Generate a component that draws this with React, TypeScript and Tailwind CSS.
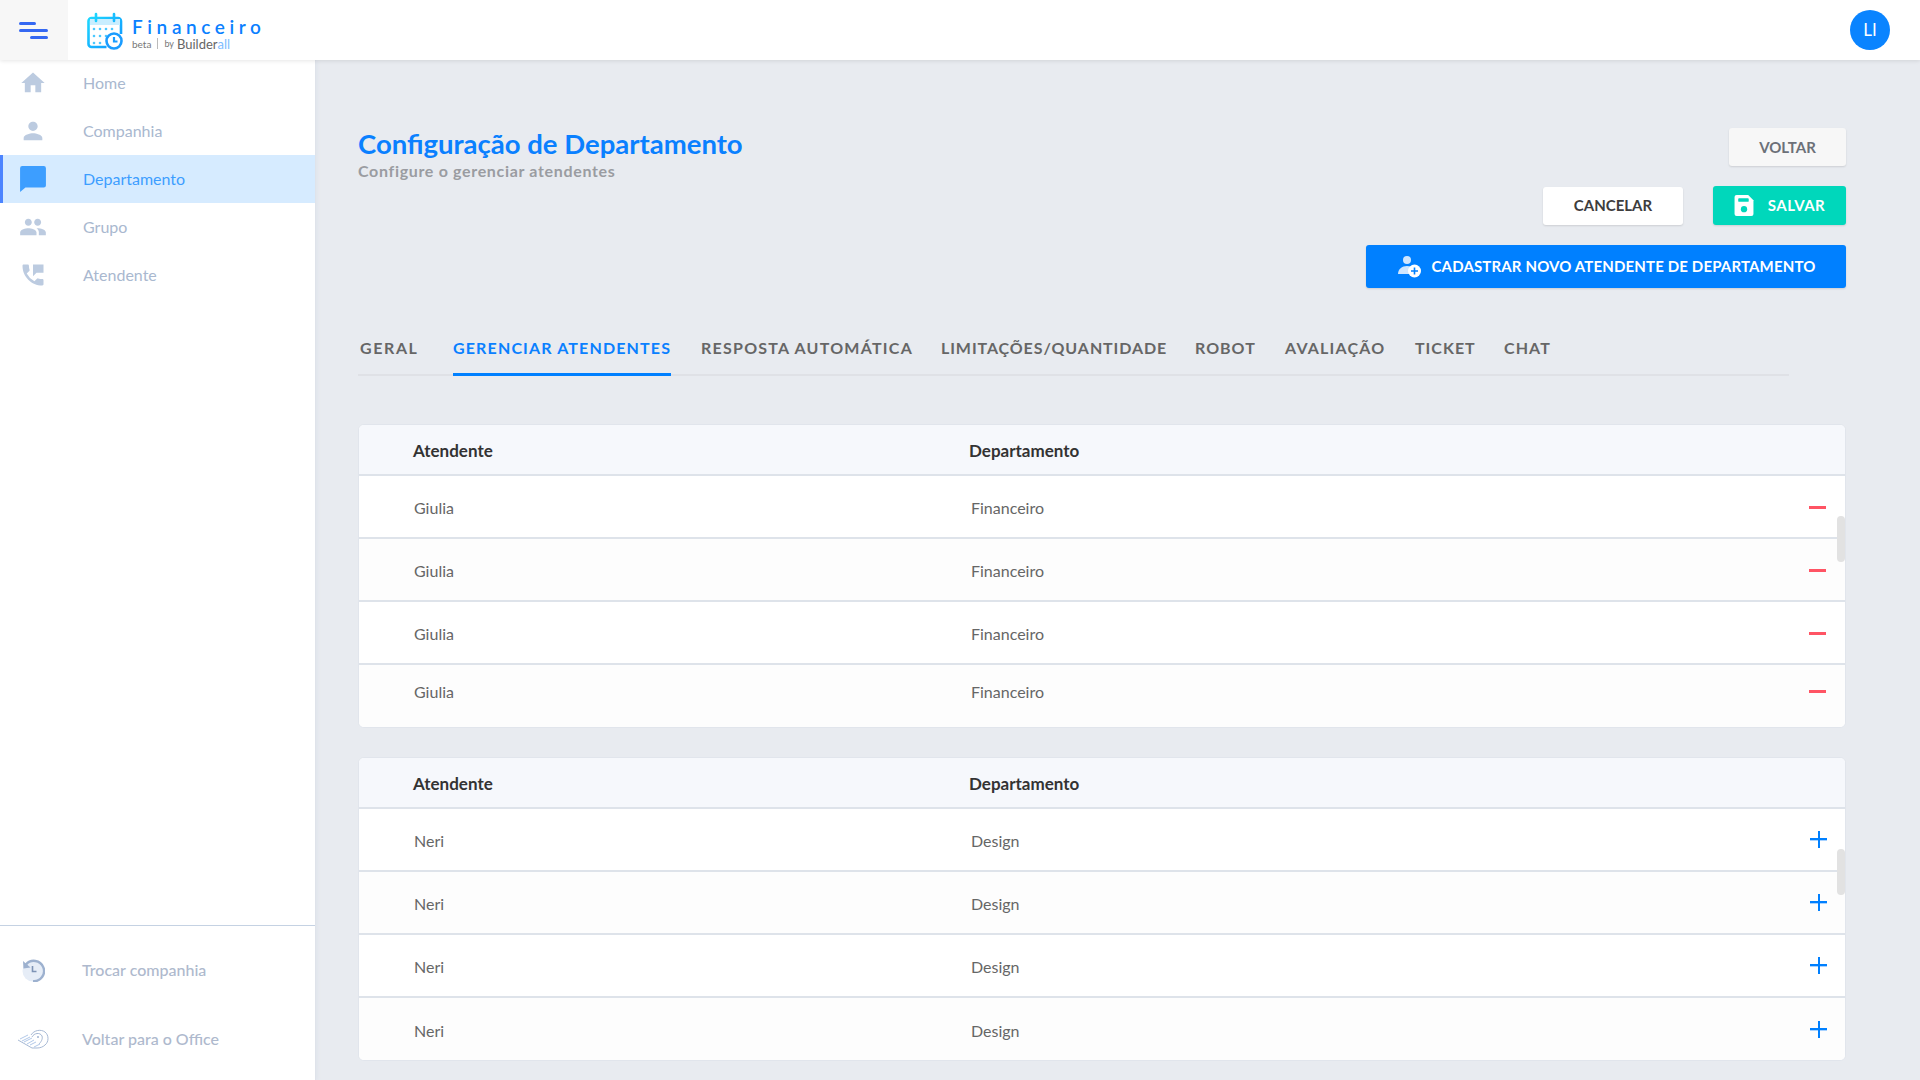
import { MdHome, MdPerson, MdPeople, MdPermPhoneMsg } from 'react-icons/md'

const font = "font-['Lato','Noto_Sans',sans-serif]"

const NAV = [
  { label: 'Home', icon: <MdHome size={30} /> },
  { label: 'Companhia', icon: <MdPerson size={30} /> },
  { label: 'Departamento', icon: <ChatIcon />, active: true },
  { label: 'Grupo', icon: <MdPeople size={32} /> },
  { label: 'Atendente', icon: <MdPermPhoneMsg size={30} /> },
]

const TABS = [
  { label: 'GERAL', w: 'w-[93px]', track: 'tracking-[1.600px]' },
  { label: 'GERENCIAR ATENDENTES', w: 'w-[248px]', track: 'tracking-[1.150px]', active: true },
  { label: 'RESPOSTA AUTOMÁTICA', w: 'w-[240px]', track: 'tracking-[1.250px]' },
  { label: 'LIMITAÇÕES/QUANTIDADE', w: 'w-[254px]', track: 'tracking-[0.900px]' },
  { label: 'ROBOT', w: 'w-[90px]', track: 'tracking-[1px]' },
  { label: 'AVALIAÇÃO', w: 'w-[130px]', track: 'tracking-[1.200px]' },
  { label: 'TICKET', w: 'w-[89px]', track: 'tracking-[1px]' },
  { label: 'CHAT', w: 'w-[70px]', track: 'tracking-[1.100px]' },
]

function ChatIcon() {
  return (
    <svg width="28" height="28" viewBox="0 0 26 26" fill="currentColor">
      <path d="M3 1h20a2 2 0 0 1 2 2v16a2 2 0 0 1-2 2H6l-5 4V3a2 2 0 0 1 2-2z" />
    </svg>
  )
}

function LogoIcon() {
  return (
    <svg width="36" height="38" viewBox="0 0 36 38" fill="none">
      <defs>
        <linearGradient id="lg" x1="0" y1="0" x2="36" y2="36" gradientUnits="userSpaceOnUse">
          <stop offset="0" stopColor="#1fe0ff" />
          <stop offset="1" stopColor="#1090ff" />
        </linearGradient>
      </defs>
      <path d="M4.500 6h26.500a3 3 0 0 1 3 3v13M1.500 9a3 3 0 0 1 3-3M1.500 9v23a3 3 0 0 0 3 3h15" stroke="url(#lg)" strokeWidth="2.600" />
      <rect x="3" y="7" width="30" height="6" fill="#c9eeff" />
      <path d="M9 2v7M27 2v7" stroke="url(#lg)" strokeWidth="2.600" strokeLinecap="round" />
      <g fill="#4cc8ff">
        <circle cx="7" cy="17" r="1.300" />
        <circle cx="13" cy="17" r="1.300" />
        <circle cx="19" cy="17" r="1.300" />
        <circle cx="25" cy="17" r="1.300" />
        <circle cx="7" cy="24" r="1.300" />
        <circle cx="13" cy="24" r="1.300" />
        <circle cx="19" cy="24" r="1.300" />
        <circle cx="7" cy="31" r="1.300" />
        <circle cx="13" cy="31" r="1.300" />
      </g>
      <circle cx="27" cy="29" r="7.500" fill="#fff" stroke="#1a9cff" strokeWidth="2.600" />
      <path d="M27 25v4.500h3.500" stroke="#1a9cff" strokeWidth="2.200" />
    </svg>
  )
}

function HistoryIcon() {
  return (
    <svg width="24" height="24" viewBox="0 0 24 24" fill="none">
      <circle cx="12" cy="13" r="10.500" fill="#e6edf7" />
      <path d="M5 6.500A10.200 10.200 0 1 1 12 23.200" stroke="#9db1cf" strokeWidth="2.400" />
      <path d="M2 3l.5 7.500 7-1z" fill="#9db1cf" />
      <path d="M11.500 8v5.500h4" stroke="#7d93b5" strokeWidth="1.600" />
    </svg>
  )
}

function HandIcon() {
  return (
    <svg width="32" height="20" viewBox="0 0 32 20" fill="none" stroke="#9db1cf" strokeWidth="0.900">
      <path d="M14 6C17 1 24 0 28 3c4 3 4 10 0 13-2 2-5 3-8 3h-5" />
      <path d="M15 8c2-4 8-5 10-1 1 3-1 6-3 8" />
      <path d="M3 10l8-4M5 12l8-4M7 13l8-4M10 15l7-4M13 16l6-3M17 18l6-3" stroke="#a9c3e6" />
      <path d="M1 11l14 8" />
      <circle cx="21" cy="8" r="0.600" fill="#9db1cf" />
    </svg>
  )
}

function SaveIcon() {
  return (
    <svg width="20" height="21" viewBox="0 0 18 20" fill="#fff">
      <path d="M2 0h11l5 5v13a2 2 0 0 1-2 2H2a2 2 0 0 1-2-2V2a2 2 0 0 1 2-2z" />
      <rect x="3.500" y="3" width="10" height="3.500" rx="0.800" fill="#00d7bb" />
      <circle cx="9" cy="13.500" r="3" fill="#00d7bb" />
    </svg>
  )
}

function AddUserIcon() {
  return (
    <svg width="26" height="24" viewBox="0 0 26 24" fill="none">
      <circle cx="10" cy="5" r="4" fill="#cfe6ff" />
      <path d="M1 19c0-5 4-8 9-8 3 0 5 1 6 2l-4 6z" fill="#cfe6ff" />
      <circle cx="17.500" cy="16" r="6.500" fill="#fff" />
      <path d="M17.500 12.500v7M14 16h7" stroke="#0080ff" strokeWidth="1.600" />
    </svg>
  )
}

function Sidebar() {
  return (
    <aside className="w-[315px] shrink-0 bg-white flex flex-col shadow-[1px_0_0_#dfe3ea,3px_0_3px_#e1e5ec]">
      <nav className="flex flex-col -mt-[1px]">
        {NAV.map((item) => (
          <div
            key={item.label}
            className={
              item.active
                ? 'h-[48px] flex items-center bg-[#d6ebff] text-[#3d9eff] border-l-[3px] border-[#4c84ff] pl-[16px]'
                : 'h-[48px] flex items-center text-[#bccbe0] pl-[16px] border-l-[3px] border-transparent'
            }
          >
            <span className="w-[28px] flex justify-center">{item.icon}</span>
            <span className={item.active ? 'ml-[36px] mb-[1px] text-[16px] text-[#3d9eff]' : 'ml-[36px] mb-[1px] text-[16px] text-[#a9b8cf]'}>{item.label}</span>
          </div>
        ))}
      </nav>
      <div className="mt-auto border-t border-[#c5d2e3] h-[155px] flex flex-col">
        <div className="flex items-center pl-[21px] mt-[19px] h-[50px] text-[16px] font-medium text-[#aeb9cd]">
          <HistoryIcon />
          <span className="ml-[37px]">Trocar companhia</span>
        </div>
        <div className="flex items-center pl-[17px] mt-[19px] h-[50px] text-[16px] font-medium text-[#aeb9cd]">
          <HandIcon />
          <span className="ml-[33px]">Voltar para o Office</span>
        </div>
      </div>
    </aside>
  )
}

function DeptTable({ name, dept, add }: { name: string; dept: string; add?: boolean }) {
  return (
    <div className="relative rounded-[6px] border border-[#e1e5ec] overflow-hidden bg-white">
      <div className="h-[51px] pt-[2px] bg-[#f6f8fc] border-b-2 border-[#dee3ea] flex items-center text-[17px] font-bold text-[#333]">
        <span className="ml-[54px] w-[556px]">Atendente</span>
        <span>Departamento</span>
      </div>
      {[0, 1, 2, 3].map((i) => (
        <div
          key={i}
          className={`flex items-center justify-between text-[16px] text-[#666] ${i % 2 ? 'bg-[#fdfdfd]' : 'bg-white'} ${i < 3 ? 'h-[63px] border-b-2 border-[#dee3ea]' : 'h-[62px]'}`}
        >
          <div className={`flex ${i === 3 && !add ? 'mb-[8px]' : 'pt-[3px]'}`}>
            <span className="ml-[55px] w-[557px]">{name}</span>
            <span>{dept}</span>
          </div>
          {add ? (
            <span className="relative mr-[18px] w-[17px] h-[17px]">
              <span className="absolute left-0 right-0 top-[7px] h-[2px] bg-[#0080ff] shadow-[0_1px_0_#a8d2ff]" />
              <span className="absolute top-0 bottom-0 left-[8px] w-[2px] bg-[#0080ff]" />
            </span>
          ) : (
            <span className={`mr-[19px] w-[17px] h-[3px] bg-[#ff5464] ${i === 3 ? 'mb-[9px]' : 'mt-[2px]'}`} />
          )}
        </div>
      ))}
      <div className="absolute right-0 top-[91px] w-[8px] h-[46px] rounded-[4px] bg-[#e2e2e2]" />
    </div>
  )
}

export default function App() {
  return (
    <div className={`${font} w-[1920px] h-[1080px] overflow-hidden flex flex-col bg-[#e8ebf0]`}>
      <header className="relative z-10 h-[60px] shrink-0 bg-white flex items-center shadow-[0_1px_4px_rgba(0,0,0,0.1)]">
        <div className="w-[68px] h-full bg-[#f7f7f7] flex flex-col justify-center gap-[4px] pl-[19px]">
          <span className="block w-[17px] h-[3px] rounded bg-[#3568f2]" />
          <span className="block w-[29px] h-[3px] rounded bg-[#3568f2]" />
          <span className="block w-[18px] h-[3px] rounded bg-[#3568f2] ml-[11px]" />
        </div>
        <div className="ml-[19px] mt-[2px]">
          <LogoIcon />
        </div>
        <div className="ml-[9px] mt-[6px] flex flex-col">
          <span className="text-[19px] leading-[20px] font-semibold tracking-[4.600px] text-[#0a80ff]">Financeiro</span>
          <span className="mt-[1px] flex items-center text-[10px] leading-[12px] text-[#777]">
            beta
            <span className="mx-[6px] w-px h-[11px] bg-[#bbb]" />
            <span className="text-[9px] mr-[3px]">by</span>
            <span className="text-[13px] text-[#666]">Builder</span>
            <span className="text-[13px] text-[#7cbcff]">all</span>
          </span>
        </div>
        <div className="ml-auto mr-[30px] w-[40px] h-[40px] rounded-full bg-[#0a84ff] text-white flex items-center justify-center text-[17px]">
          LI
        </div>
      </header>

      <div className="flex flex-1 min-h-0">
        <Sidebar />
        <main className="flex-1 pl-[43px] pr-[74px] pt-[68px]">
          <div className="flex justify-between h-[206px]">
            <div>
              <h1 className="text-[27.500px] leading-[32px] font-bold text-[#0a80ff]">Configuração de Departamento</h1>
              <p className="text-[16px] leading-[20px] mt-[1px] font-bold tracking-[0.670px] text-[#9a9ca1]">Configure o gerenciar atendentes</p>
            </div>
            <div className="flex flex-col items-end">
              <button className="w-[117px] h-[38px] rounded-[3px] bg-[#f7f7f7] shadow-[0_1px_2px_rgba(0,0,0,0.12)] text-[15px] font-bold text-[#6c7078]">VOLTAR</button>
              <div className="flex items-center gap-[30px] mt-[20px]">
                <button className="w-[140px] h-[38px] rounded-[3px] bg-white shadow-[0_1px_2px_rgba(0,0,0,0.12)] text-[15px] font-bold text-[#3d3d3d]">CANCELAR</button>
                <button className="w-[133px] h-[39px] rounded-[3px] bg-[#00d7bb] shadow-[0_1px_2px_rgba(0,0,0,0.12)] text-[15px] font-bold tracking-[0.500px] text-white flex items-center justify-center gap-[14px]">
                  <SaveIcon />
                  SALVAR
                </button>
              </div>
              <button className="mt-[20px] w-[480px] h-[43px] rounded-[3px] bg-[#0080ff] shadow-[0_1px_2px_rgba(0,0,0,0.12)] text-[15px] font-bold tracking-[0.150px] text-white flex items-center justify-center gap-[9px]">
                <AddUserIcon />
                CADASTRAR NOVO ATENDENTE DE DEPARTAMENTO
              </button>
            </div>
          </div>

          <div className="mr-[57px] h-[42px] flex border-b-2 border-[#dfe1e6] mb-[48px]">
            {TABS.map((t) => (
              <div key={t.label} className={`${t.w} shrink-0`}>
                <span
                  className={
                    t.active
                      ? `block w-[218px] ml-[2px] h-[42px] border-b-[3px] border-[#0080ff] text-[#0a80ff] text-[16px] font-bold ${t.track} whitespace-nowrap pt-[2px]`
                      : `block ml-[2px] h-[40px] text-[#666] text-[16px] font-bold ${t.track} whitespace-nowrap pt-[2px]`
                  }
                >
                  {t.label}
                </span>
              </div>
            ))}
          </div>

          <DeptTable name="Giulia" dept="Financeiro" />
          <div className="h-[29px]" />
          <DeptTable name="Neri" dept="Design" add />
        </main>
      </div>
    </div>
  )
}
